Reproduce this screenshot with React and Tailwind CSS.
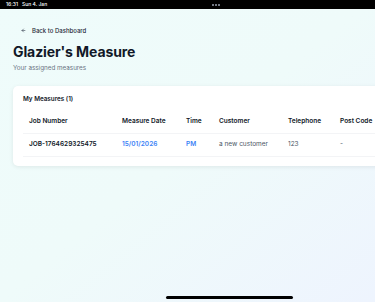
import React from "react";

// Glazier's Measure — tablet view, scaled down

const rows = [
  {
    job: "JOB-1764629325475",
    date: "15/01/2026",
    time: "PM",
    customer: "a new customer",
    phone: "123",
    postcode: "-",
  },
];

const cols = "grid grid-cols-[93px_64px_33px_69px_52px_70px]";

export default function App() {
  return (
    <div className="relative w-[375px] h-[302px] overflow-hidden bg-gradient-to-br from-[#effcfb] via-[#effbfa] to-[#eef4fe] font-['Inter',sans-serif]">
      {/* status bar */}
      <div className="flex items-center h-[9px] bg-black px-[6px] text-white text-[5px] font-medium">
        <span>16:31</span>
        <span className="ml-[4px]">Sun 4. Jan</span>
        <div className="flex gap-[1px] ml-[165px]">
          <span className="w-[2px] h-[2px] rounded-full bg-gray-400" />
          <span className="w-[2px] h-[2px] rounded-full bg-gray-400" />
          <span className="w-[2px] h-[2px] rounded-full bg-gray-400" />
        </div>
      </div>

      <div className="pl-[13px] pt-[16px]">
        {/* back link */}
        <div className="flex items-center h-[10px] pl-[8px] gap-[6px] text-[6px] font-medium text-gray-800">
          <svg className="w-[5px] h-[5px]" viewBox="0 0 24 24" fill="none" stroke="currentColor" strokeWidth={2.5} strokeLinecap="round" strokeLinejoin="round">
            <path d="M19 12H5M12 19l-7-7 7-7" />
          </svg>
          <span>Back to Dashboard</span>
        </div>

        <h1 className="mt-[7px] text-[14px] leading-[20px] font-bold text-[#111827] tracking-[-0.1px]">
          Glazier's Measure
        </h1>
        <p className="mt-[2px] text-[6.3px] leading-[9px] text-gray-500">Your assigned measures</p>

        {/* card */}
        <div className="mt-[13px] w-[440px] bg-white rounded-[5px] shadow-[0_1px_4px_rgba(0,0,0,0.08)] pt-[9px] pb-[9px] pl-[10px]">
          <p className="text-[6.3px] leading-[8px] font-semibold text-gray-900">My Measures (1)</p>

          <div className="mt-[14px]">
            <div className={`${cols} h-[17px] items-start text-[6.5px] font-semibold text-gray-900 border-b border-gray-100`}>
              <span className="pl-[6px]">Job Number</span>
              <span className="pl-[6px]">Measure Date</span>
              <span className="pl-[6px]">Time</span>
              <span className="pl-[6px]">Customer</span>
              <span className="pl-[6px]">Telephone</span>
              <span className="pl-[6px]">Post Code</span>
            </div>
            {rows.map((r) => (
              <div key={r.job} className={`${cols} h-[23px] items-center text-[6.5px] border-b border-gray-100`}>
                <span className="pl-[6px] font-semibold text-gray-900">{r.job}</span>
                <span className="pl-[6px] font-semibold text-[#3b82f6]">{r.date}</span>
                <span className="pl-[6px] font-semibold text-[#3b82f6]">{r.time}</span>
                <span className="pl-[6px] text-gray-600">{r.customer}</span>
                <span className="pl-[6px] text-gray-600">{r.phone}</span>
                <span className="pl-[6px] text-gray-600">{r.postcode}</span>
              </div>
            ))}
          </div>
        </div>
      </div>

      {/* home indicator */}
      <div className="absolute left-[166px] top-[296px] w-[127px] h-[3px] rounded-full bg-black" />
    </div>
  );
}
